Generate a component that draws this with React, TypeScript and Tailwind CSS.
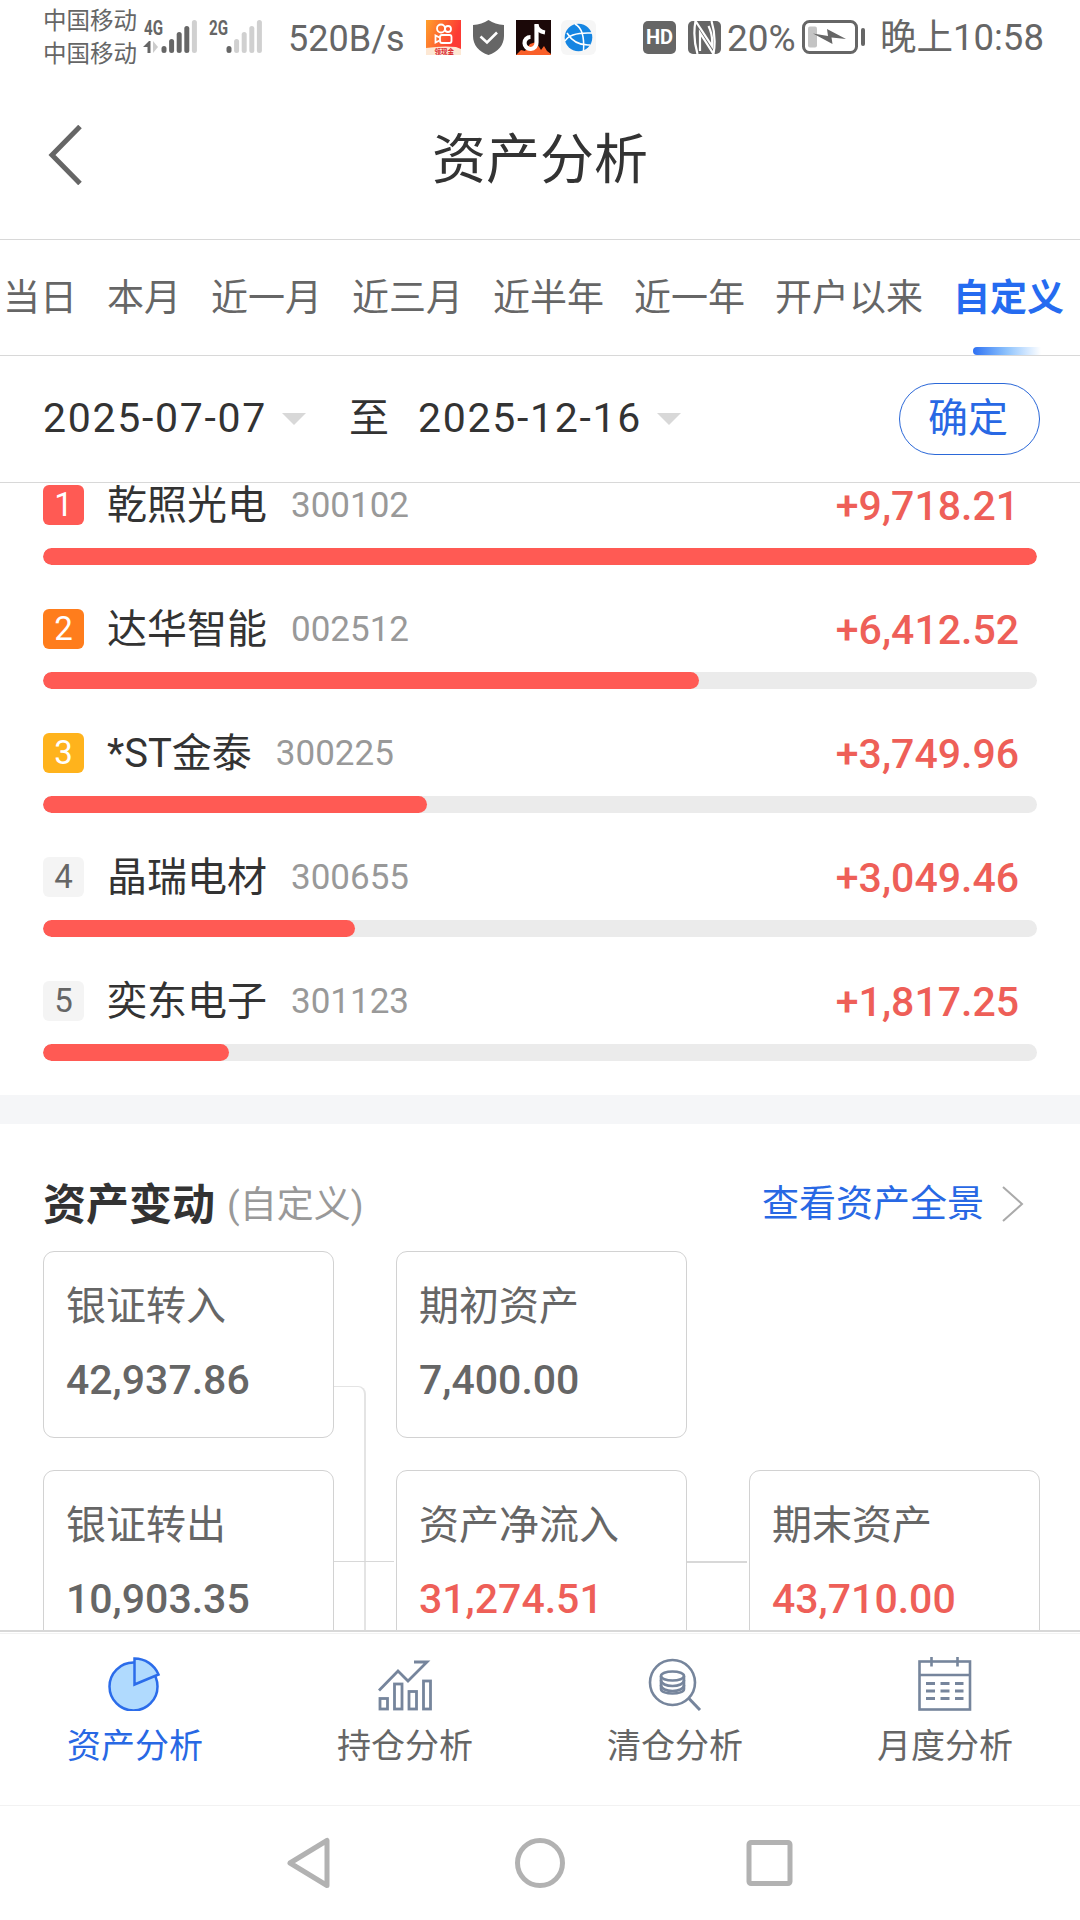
import React, { useState } from 'react';

const ranges = ['当日', '本月', '近一月', '近三月', '近半年', '近一年', '开户以来', '自定义'];

const stocks = [
  { name: '乾照光电', code: '300102', profit: '+9,718.21', percent: 100, badge: 'bg-[#ff5a54] text-white' },
  { name: '达华智能', code: '002512', profit: '+6,412.52', percent: 66, badge: 'bg-[#ff7d1c] text-white' },
  { name: '*ST金泰', code: '300225', profit: '+3,749.96', percent: 38.6, badge: 'bg-[#ffb31c] text-white' },
  { name: '晶瑞电材', code: '300655', profit: '+3,049.46', percent: 31.4, badge: 'bg-[#f4f4f4] text-[#666]' },
  { name: '奕东电子', code: '301123', profit: '+1,817.25', percent: 18.7, badge: 'bg-[#f4f4f4] text-[#666]' }
];

const SignalBars: React.FC<{ label: string; strength: number; data?: boolean }> = ({ label, strength, data }) => {
  const tops = [45, 38, 31, 25, 19];
  return (
    <svg className="overflow-visible" width="56" height="38" viewBox="0 17 56 38">
      <text x="1" y="34" textLength="19" lengthAdjust="spacingAndGlyphs" fontSize="20" fontWeight="700" fill="#666" fontFamily="Roboto, sans-serif">
        {label}
      </text>
      {data && (
        <>
          <path d="M0 46 L6 40 H7.500 V52 H4.500 V46 Z" fill="#666" />
          <path d="M10 40 L15 46 L10 52 Z" fill="#ccc" />
        </>
      )}
      {tops.map((top, i) => (
        <rect key={top} x={18.500 + i * 7.600} y={top} width="5" height={52 - top} rx="2.500" fill={i < strength ? '#666' : '#d0d0d0'} />
      ))}
    </svg>
  );
};

const KuaishouIcon = () => (
  <svg width="35" height="35" viewBox="0 0 35 35">
    <defs>
      <linearGradient id="ks" x1="0" y1="0" x2="1" y2="0.4">
        <stop offset="0" stopColor="#ffa02a" />
        <stop offset="0.9" stopColor="#fc3a34" />
      </linearGradient>
    </defs>
    <rect width="35" height="35" fill="url(#ks)" />
    <g fill="none" stroke="#fff" strokeWidth="1.800">
      <circle cx="15" cy="8.500" r="4" />
      <circle cx="22" cy="9" r="3" />
      <rect x="14" y="15" width="11.500" height="8" rx="2" />
      <path d="M13.500 17.500 L9.500 15.500 V22.500 L13.500 20.500" />
    </g>
    <path d="M0 28 Q17 25.500 30 27 L35 29 V35 H0 Z" fill="#fde8d4" />
    <text x="8.500" y="33.500" fontSize="6.500" fontWeight="700" fill="#d8252c" fontFamily="'Noto Sans CJK SC', sans-serif">领现金</text>
  </svg>
);

const ShieldIcon = () => (
  <svg width="31" height="35" viewBox="0 0 31 35">
    <path d="M15.500 0 C20 3 25 4.500 31 5 V16 C31 25 25 32 15.500 35 C6 32 0 25 0 16 V5 C6 4.500 11 3 15.500 0 Z" fill="#666" />
    <path d="M7.500 16.500 L14 22.500 L24 12.500" fill="none" stroke="#fff" strokeWidth="2.600" />
  </svg>
);

const DouyinIcon = () => (
  <svg width="35" height="35" viewBox="0 0 35 35">
    <rect width="35" height="35" fill="#1b0808" />
    <path d="M0 35 L5 30 L9 31 L14 24 L20 22 L25 30 L28 26 L31 31 L35 34 V35 Z" fill="#f9602a" />
    <path d="M20.500 4 V22.500 A6 6 0 1 1 14.500 17" fill="none" stroke="#fff" strokeWidth="4.200" />
    <path d="M20.500 5 Q22 11.500 29 12.500" fill="none" stroke="#fff" strokeWidth="4" />
  </svg>
);

const BrowserIcon = () => (
  <svg width="35" height="35" viewBox="0 0 35 35">
    <rect width="35" height="35" rx="6" fill="#f6f6f6" />
    <circle cx="17.500" cy="17.500" r="13.800" fill="#1585e2" />
    <g fill="none" stroke="#fff" strokeWidth="1.500">
      <path d="M14 4 Q24 9 22.500 31" />
      <path d="M4 21 Q9 12 31 13" />
      <path d="M6 13 Q14 26 29 25" />
    </g>
  </svg>
);

const NfcIcon = () => (
  <svg width="33" height="33" viewBox="0 0 33 33">
    <rect width="33" height="33" rx="5" fill="#666" />
    <path d="M9.500 33 Q4.500 16 7.500 0 L24 25 Q25 14 20.500 5" fill="none" stroke="#fff" strokeWidth="2.200" />
    <path d="M23.500 0 Q28.500 16 25.500 33 L12 12 V30" fill="none" stroke="#fff" strokeWidth="2.200" />
  </svg>
);

const BatteryIcon = () => (
  <svg width="64" height="34" viewBox="0 0 64 34">
    <rect x="1.500" y="1.500" width="53" height="31" rx="6" fill="none" stroke="#666" strokeWidth="3" />
    <rect x="6" y="6.500" width="9" height="21" rx="2" fill="#c4c4c4" />
    <path d="M11 13.500 L26 16 L25 9 L44 19 L29.500 17.500 L30.500 24 Z" fill="#666" />
    <rect x="59" y="8" width="4" height="18" rx="2" fill="#666" />
  </svg>
);

const PieIcon = () => (
  <svg width="54" height="54" viewBox="0 0 54 54" fill="#b0dafe" stroke="#2b6cea" strokeWidth="2.500">
    <circle cx="25.500" cy="29.500" r="24" />
    <path d="M26.500 1.500 V27.500 L50.500 17.500 A26 26 0 0 0 26.500 1.500 Z" />
  </svg>
);

const TrendIcon = () => (
  <svg width="54" height="54" viewBox="0 0 54 54" fill="none" stroke="#76859c" strokeWidth="2.800">
    <path d="M1 33.500 L20 14 L30 24 L49 5 H36" />
    <rect x="2" y="41.500" width="7.500" height="10.500" />
    <rect x="16.500" y="27" width="7.500" height="25" />
    <rect x="31" y="34.500" width="7.500" height="17.500" />
    <rect x="45.500" y="24" width="7" height="28" />
  </svg>
);

const SearchCoinsIcon = () => (
  <svg width="54" height="54" viewBox="0 0 54 54" fill="none" stroke="#76859c" strokeWidth="2.600">
    <circle cx="24.500" cy="25.500" r="22.500" />
    <path d="M40.500 41 L52 53" strokeWidth="3" />
    <ellipse cx="24.500" cy="19" rx="11.500" ry="4.500" />
    <path d="M13 19 V32 C13 38 36 38 36 32 V19" />
    <path d="M13 23 C13 31 36 31 36 23 M13 28 C13 36 36 36 36 28" />
  </svg>
);

const CalendarIcon = () => (
  <svg width="54" height="54" viewBox="0 0 54 54" fill="none" stroke="#76859c" strokeWidth="2.600">
    <rect x="1.500" y="4.500" width="50.500" height="48" />
    <path d="M1.500 18 H52 M13.500 0 V9.500 M39.500 0 V9.500" />
    <path d="M8 26.500 H45.500 M8 34 H45.500 M8 41.500 H45.500" strokeWidth="3" strokeDasharray="9 5.500" />
  </svg>
);

const navItems = [
  { label: '资产分析', icon: PieIcon },
  { label: '持仓分析', icon: TrendIcon },
  { label: '清仓分析', icon: SearchCoinsIcon },
  { label: '月度分析', icon: CalendarIcon }
];

const AssetCard: React.FC<{ label: string; value: string; red?: boolean }> = ({ label, value, red }) => (
  <div className="h-[187px] w-[291px] shrink-0 rounded-[11px] border border-[#d2d2d2] bg-white pl-[22px] pt-[25px]">
    <div className="text-[40px] leading-[60px] text-[#666]">{label}</div>
    <div className={`mt-[14px] text-[41px] font-medium leading-[58px] ${red ? 'text-[#ee5f58]' : 'text-[#666]'}`}>{value}</div>
  </div>
);

const Caret = () => (
  <svg className="ml-[17px] shrink-0" width="24" height="12" viewBox="0 0 24 12">
    <path d="M0 0 H24 L12 12 Z" fill="#d8d8d8" />
  </svg>
);

export default function App() {
  const [range, setRange] = useState('自定义');
  const [tab, setTab] = useState('资产分析');

  return (
    <div className="flex h-[1920px] w-[1080px] flex-col overflow-hidden whitespace-nowrap bg-white font-[Roboto,'Noto_Sans_CJK_SC',sans-serif] text-[#333]">
      {/* Status bar */}
      <div className="flex h-[74px] shrink-0 items-center pl-[43px] text-[#666]">
        <div className="w-[96px] pt-[2px] text-[23.5px] leading-[33px]">
          <div>中国移动</div>
          <div>中国移动</div>
        </div>
        <div className="ml-[4px]"><SignalBars label="4G" strength={4} data /></div>
        <div className="ml-[9px]"><SignalBars label="2G" strength={1} /></div>
        <div className="ml-[24px] w-[138px] pt-[3px] text-[36px]">520B/s</div>
        <div className="flex items-center">
          <KuaishouIcon />
          <div className="ml-[12px]"><ShieldIcon /></div>
          <div className="ml-[12px]"><DouyinIcon /></div>
          <div className="ml-[10px]"><BrowserIcon /></div>
        </div>
        <div className="ml-[47px] flex h-[33px] w-[33px] items-center justify-center rounded-[5px] bg-[#666] text-[20px] font-bold text-white">HD</div>
        <div className="ml-[12px]"><NfcIcon /></div>
        <div className="ml-[6px] w-[75px] pt-[3px] text-[37px]">20%</div>
        <BatteryIcon />
        <div className="ml-[14px] pt-[3px] text-[36.5px]">晚上10:58</div>
      </div>

      {/* Title */}
      <div className="flex h-[166px] shrink-0 items-center border-b border-[#d8d8d8] px-[48px]">
        <svg className="mb-[4px]" width="36" height="60" viewBox="0 0 36 60">
          <path d="M32 1.500 L4 30 L32 58.500" fill="none" stroke="#666" strokeWidth="5" />
        </svg>
        <h1 className="flex-1 pr-[36px] pt-[7px] text-center text-[54px]">资产分析</h1>
      </div>

      {/* Range tabs */}
      <div className="flex h-[116px] shrink-0 justify-start gap-[30px] border-b border-[#d8d8d8] pl-[3px] text-[37px] text-[#666]">
        {ranges.map((item) => (
          <button
            key={item}
            onClick={() => setRange(item)}
            className={`relative shrink-0 pt-[2px] ${range === item ? 'font-bold text-[#256bf0]' : ''}`}
          >
            {item}
            {range === item && (
              <span className="absolute bottom-0 left-[20px] h-[8px] w-[68px] rounded-l-[4px] bg-gradient-to-r from-[#2f70f2] via-[#8fc3fc] to-white"></span>
            )}
          </button>
        ))}
      </div>

      {/* Date picker */}
      <div className="flex h-[127px] shrink-0 items-center border-b border-[#d8d8d8] pl-[43px] pr-[40px] text-[41px]">
        <span className="w-[222px] tracking-[1.7px]">2025-07-07</span>
        <Caret />
        <span className="ml-[43px] w-[69px] text-[40px]">至</span>
        <span className="w-[222px] tracking-[1.7px]">2025-12-16</span>
        <Caret />
        <button className="ml-auto h-[72px] w-[141px] rounded-full border-[1.5px] border-[#2b68d8] pr-[3px] text-[40px] leading-[70px] text-[#2868e4]">确定</button>
      </div>

      {/* Content */}
      <div className="min-h-0 flex-1 overflow-hidden">
        <div className="h-[612px] pl-[43px] pr-[43px] pt-[2px]">
          {stocks.map((stock, index) => (
            <div key={stock.code} className="h-[124px]">
              <div className="flex h-[40px] items-center leading-[38px]">
                <div className={`flex h-[40px] w-[41px] items-center justify-center rounded-[6px] text-[33px] ${stock.badge}`}>{index + 1}</div>
                <span className="ml-[23px] pt-[2px] text-[40px]">{stock.name}</span>
                <span className="ml-[24px] pt-[2px] text-[35px] text-[#999]">{stock.code}</span>
                <span className="ml-auto mr-[18px] pt-[2px] text-[41px] font-medium text-[#ee5f58]">{stock.profit}</span>
              </div>
              <div className="mt-[23px] h-[17px] overflow-hidden rounded-full bg-[#ebebeb]">
                <div className="h-full rounded-full bg-[#ff5a54]" style={{ width: `${stock.percent}%` }}></div>
              </div>
            </div>
          ))}
        </div>
        <div className="h-[29px] bg-[#f5f6f8]"></div>

        <div className="px-[43px]">
          <div className="flex h-[127px] items-center pt-[32px]">
            <h2 className="pt-[3px] text-[43px] font-bold">资产变动</h2>
            <span className="ml-[12px] pt-[4px] text-[37px]  text-[#999]">(自定义)</span>
            <a className="ml-auto pt-[3px] text-[37px] text-[#2868e4]">查看资产全景</a>
            <svg className="ml-[18px] mr-[13px]" width="22" height="36" viewBox="0 0 22 36">
              <path d="M1 1 L20 18 L1 35" fill="none" stroke="#aaa" strokeWidth="2" />
            </svg>
          </div>
          <div className="flex">
            <AssetCard label="银证转入" value="42,937.86" />
            <div className="w-[62px] shrink-0">
              <div className="mt-[135px] h-[84px] w-[32px] rounded-tr-[8px] border-r-2 border-t border-[#e4e4e4]"></div>
            </div>
            <AssetCard label="期初资产" value="7,400.00" />
          </div>
          <div className="flex">
            <AssetCard label="银证转出" value="10,903.35" />
            <div className="w-[62px] shrink-0">
              <div className="h-[91px] w-[32px] border-r-2 border-[#e4e4e4]"></div>
              <div className="h-px w-[60px] bg-[#d8d8d8]"></div>
              <div className="h-[95px] w-[32px] border-r-2 border-[#e4e4e4]"></div>
            </div>
            <AssetCard label="资产净流入" value="31,274.51" red />
            <div className="mr-[2px] mt-[91px] h-[2px] w-[60px] shrink-0 bg-[#d8d8d8]"></div>
            <AssetCard label="期末资产" value="43,710.00" red />
          </div>
        </div>
      </div>

      {/* Bottom navigation */}
      <div className="shrink-0 border-t-2 border-[#d8d8d8] pt-px">
        <div className="flex h-[173px] border-b border-t border-[#f2f2f2]">
          {navItems.map((item) => (
            <button
              key={item.label}
              onClick={() => setTab(item.label)}
              className={`flex flex-1 flex-col items-center pt-[23px] text-[34px] ${tab === item.label ? 'text-[#2868e4]' : 'text-[#666]'}`}
            >
              <item.icon />
              <span className="mt-[10px] leading-[50px]">{item.label}</span>
            </button>
          ))}
        </div>
      </div>

      {/* System navigation */}
      <div className="flex h-[114px] shrink-0 items-center justify-center gap-[178px] bg-white">
        <svg width="52" height="52" viewBox="0 0 52 52" fill="none" stroke="#b2b2b2" strokeWidth="5" strokeLinejoin="round">
          <path d="M6 26 L43 3.500 V48.500 Z" />
        </svg>
        <svg width="52" height="52" viewBox="0 0 52 52" fill="none" stroke="#b2b2b2" strokeWidth="5">
          <circle cx="26" cy="26" r="22.500" />
        </svg>
        <svg width="52" height="52" viewBox="0 0 52 52" fill="none" stroke="#b2b2b2" strokeWidth="5">
          <rect x="5" y="5.500" width="41" height="41" rx="2" />
        </svg>
      </div>
    </div>
  );
}
